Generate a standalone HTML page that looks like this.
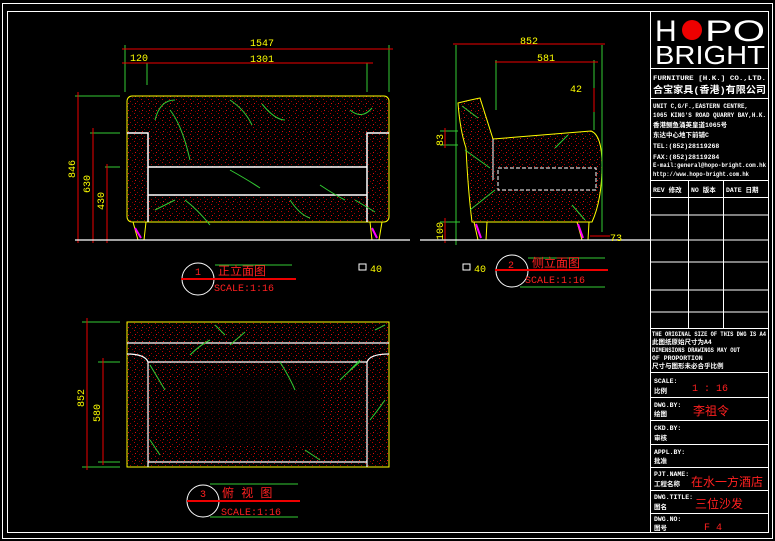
<!DOCTYPE html>
<html><head><meta charset="utf-8"><style>
html,body{margin:0;padding:0;background:#000;width:775px;height:541px;overflow:hidden}
svg{display:block}
text{font-family:"Liberation Mono","Noto Sans CJK SC",monospace}
.y{fill:#ffff00;font-size:10px}
.r{fill:#ff2020}
.w{fill:#fff;font-weight:bold;font-size:6.5px}
.logo{font-family:"Liberation Sans",sans-serif;fill:#fff}
</style></head><body>
<svg width="775" height="541" viewBox="0 0 775 541" xmlns="http://www.w3.org/2000/svg">
<defs>
<pattern id="sp" width="7" height="7" patternUnits="userSpaceOnUse">
<rect x="1" y="1" width="1" height="1" fill="#b00"/><rect x="4" y="3" width="1" height="1" fill="#900"/><rect x="2" y="5" width="1" height="1" fill="#d11"/><rect x="6" y="6" width="1" height="1" fill="#700"/>
</pattern>
</defs>
<rect width="775" height="541" fill="#000"/>
<rect x="2.5" y="3.5" width="770" height="535" fill="none" stroke="#fff" stroke-width="1"/>
<rect x="7.5" y="11.5" width="761" height="521" fill="none" stroke="#fff" stroke-width="1"/>

<!-- FRONT VIEW -->
<g>
<rect x="127" y="96" width="262" height="126" rx="5" fill="url(#sp)"/>
<rect x="148" y="167" width="219" height="28" fill="#000"/>
<rect x="127" y="96" width="262" height="126" rx="5" fill="none" stroke="#ff0" stroke-width="1"/>
<path d="M127 133H148V222M389 133H367V222M148 167H367M148 195H367" stroke="#fff" stroke-width="1.5" fill="none"/>
<path d="M133 222L138 240H144L146 222M370 222L372 240H379L382 222" stroke="#ff0" fill="none"/>
<path d="M135 228L141 238M372 228L377 238" stroke="#f0f" stroke-width="2"/>
<g stroke="#3c3" fill="none" stroke-width="1">
<path d="M170 110Q182 125 190 160"/><path d="M230 100Q245 110 252 125"/><path d="M262 104Q275 120 285 120"/><path d="M185 200Q198 210 210 225"/><path d="M230 170Q248 180 260 188"/><path d="M290 200Q300 215 310 218"/><path d="M320 185Q335 195 345 200"/><path d="M350 110Q362 120 372 108"/><path d="M155 120Q160 100 175 100"/><path d="M155 210L175 200"/><path d="M355 200L375 212"/>
</g>
<g stroke="#3c3" stroke-width="1">
<path d="M125 45V92M389 45V92M147 63V85M367 63V92M75 96H120M90 133H120M105 167H120M78 240H120"/>
</g>
<g stroke="#e00" stroke-width="1">
<path d="M122 49H393M122 63H373M78 92V243M93 128V243M107 164V243"/>
</g>
<path d="M75 240H410" stroke="#fff" stroke-width="1.2"/>
<text class="y" x="250" y="46">1547</text>
<text class="y" x="130" y="61">120</text>
<text class="y" x="250" y="62">1301</text>
<text class="y" transform="translate(75,178) rotate(-90)">846</text>
<text class="y" transform="translate(90,193) rotate(-90)">630</text>
<text class="y" transform="translate(104,210) rotate(-90)">430</text>
<rect x="359" y="264" width="7" height="6" fill="none" stroke="#fff"/>
<text class="y" x="370" y="272">40</text>
<circle cx="198" cy="279" r="16" fill="none" stroke="#fff"/>
<path d="M215 265H292" stroke="#3c3"/><path d="M181 279H296" stroke="#e00" stroke-width="2"/>
<text class="r" x="195" y="275" font-size="10">1</text>
<text class="r" x="218" y="275" font-size="12">正立面图</text>
<text class="r" x="214" y="291" font-size="10">SCALE:1:16</text>
</g>

<!-- SIDE VIEW -->
<g>
<path d="M458 103Q470 100 480 98L493 139L591 131Q602 135 602 165Q602 200 592 222H472Q468 190 466 148Q460 130 458 103Z" fill="url(#sp)" stroke="#ff0"/>
<path d="M498 168H596V190H498Z" fill="#000" stroke="#fff" stroke-dasharray="4 2"/>
<path d="M493 139V180" stroke="#fff"/>
<path d="M474 222L478 240H486L487 222M577 222L582 240H588L589 222" stroke="#ff0" fill="none"/>
<path d="M476 224L481 238M578 224L583 238" stroke="#f0f" stroke-width="2"/>
<g stroke="#3c3" fill="none"><path d="M462 106L478 118M465 150L490 168M470 210L495 190M555 148L568 135M572 205L585 220"/></g>
<g stroke="#3c3"><path d="M456 45V245M496 60V110M594 60V130M602 45V232M440 131H458M440 145H458M440 222H460"/></g>
<g stroke="#e00"><path d="M453 44H605M495 62H598M594 88V112M445 128V148M445 218V243M590 236H610"/></g>
<path d="M420 240H650" stroke="#fff" stroke-width="1.2"/>
<text class="y" x="520" y="44">852</text>
<text class="y" x="537" y="61">581</text>
<text class="y" x="570" y="92">42</text>
<text class="y" transform="translate(443,146) rotate(-90)">83</text>
<text class="y" transform="translate(443,240) rotate(-90)">100</text>
<text class="y" x="610" y="241">73</text>
<rect x="463" y="264" width="7" height="6" fill="none" stroke="#fff"/>
<text class="y" x="474" y="272">40</text>
<circle cx="512" cy="271" r="16" fill="none" stroke="#fff"/>
<path d="M528 258H605M520 287H605" stroke="#3c3"/><path d="M495 270H608" stroke="#e00" stroke-width="2"/>
<text class="r" x="508" y="268" font-size="10">2</text>
<text class="r" x="532" y="267" font-size="12">侧立面图</text>
<text class="r" x="525" y="283" font-size="10">SCALE:1:16</text>
</g>

<!-- TOP VIEW -->
<g>
<rect x="127" y="322" width="262" height="145" fill="url(#sp)"/>
<rect x="127" y="322" width="262" height="145" fill="none" stroke="#ff0"/>
<path d="M127 343H389M127 354Q145 354 148 362V467M389 354Q370 354 367 362V467M148 362H367M148 462H367" stroke="#fff" fill="none" stroke-width="1.2"/>
<rect x="200" y="375" width="120" height="70" fill="#000" opacity=".6"/>
<g stroke="#3c3" fill="none"><path d="M190 355Q200 345 210 340M230 345L245 332M280 362Q290 378 295 390M350 370L360 360M150 365L165 390M340 380Q350 370 360 362M150 440L160 455M305 450L320 460M370 420Q378 410 385 400M215 325L225 335M375 330L385 325"/></g>
<g stroke="#3c3"><path d="M82 322H120M98 362H120M82 467H120M98 462H120"/></g>
<g stroke="#e00"><path d="M87 318V470M103 358V465"/></g>
<text class="y" transform="translate(84,407) rotate(-90)">852</text>
<text class="y" transform="translate(100,422) rotate(-90)">580</text>
<circle cx="203" cy="501" r="16" fill="none" stroke="#fff"/>
<path d="M210 484H298M210 517H298" stroke="#3c3"/><path d="M187 501H300" stroke="#e00" stroke-width="2"/>
<text class="r" x="200" y="497" font-size="10">3</text>
<text class="r" x="222" y="497" font-size="12">俯 视 图</text>
<text class="r" x="221" y="515" font-size="10">SCALE:1:16</text>
</g>

<!-- TITLE BLOCK -->
<g stroke="#fff" stroke-width="1" fill="none">
<path d="M650.5 11V532"/>
<path d="M650 68.5H768M650 98.5H768M650 180.5H768M650 197.5H768M650 215H768M650 240H768M650 262H768M650 290H768M650 312H768M650 328.5H768M650 372.5H768M650 397.5H768M650 420.5H768M650 444.5H768M650 467.5H768M650 490.5H768M650 513.5H768"/>
<path d="M688.5 180V328M723.5 180V328"/>
</g>
<text class="logo" x="655" y="41" font-size="30">H</text>
<circle cx="692" cy="30" r="10" fill="#e00"/>
<text class="logo" x="705" y="41" font-size="30" textLength="60" lengthAdjust="spacingAndGlyphs">PO</text>
<text class="logo" x="655" y="64" font-size="26" textLength="110" lengthAdjust="spacingAndGlyphs">BRIGHT</text>
<text class="w" x="653" y="80" textLength="113" lengthAdjust="spacingAndGlyphs">FURNITURE [H.K.] CO.,LTD.</text>
<text x="653" y="93" fill="#fff" font-size="9.5" font-weight="bold" textLength="113" lengthAdjust="spacingAndGlyphs">合宝家具(香港)有限公司</text>
<text class="w" x="653" y="108" textLength="95" lengthAdjust="spacingAndGlyphs">UNIT C,G/F.,EASTERN CENTRE,</text>
<text class="w" x="653" y="117" textLength="113" lengthAdjust="spacingAndGlyphs">1065 KING'S ROAD QUARRY BAY,H.K.</text>
<text class="w" x="653" y="127">香港鲗鱼涌英皇道1065号</text>
<text class="w" x="653" y="137">东达中心地下前铺C</text>
<text class="w" x="653" y="148" font-size="8">TEL:(852)28119268</text>
<text class="w" x="653" y="159" font-size="8">FAX:(852)28119284</text>
<text class="w" x="653" y="167" font-size="5.5" textLength="113" lengthAdjust="spacingAndGlyphs">E-mail:general@hopo-bright.com.hk</text>
<text class="w" x="653" y="176" font-size="5.5" textLength="96" lengthAdjust="spacingAndGlyphs">http://www.hopo-bright.com.hk</text>
<text class="w" x="653" y="192">REV 修改</text>
<text class="w" x="691" y="192">NO 版本</text>
<text class="w" x="726" y="192">DATE 日期</text>
<text class="w" x="652" y="336" font-size="5" textLength="114" lengthAdjust="spacingAndGlyphs">THE ORIGINAL SIZE OF THIS DWG IS A4</text>
<text class="w" x="652" y="344" font-size="5">此图纸原始尺寸为A4</text>
<text class="w" x="652" y="352" font-size="5" textLength="88" lengthAdjust="spacingAndGlyphs">DIMENSIONS DRAWINGS MAY OUT</text>
<text class="w" x="652" y="360" font-size="5">OF PROPORTION</text>
<text class="w" x="652" y="368" font-size="5.5">尺寸与图形未必合乎比例</text>
<text class="w" x="654" y="383">SCALE:</text><text class="w" x="654" y="393">比例</text>
<text class="r" x="692" y="391" font-size="10">1 : 16</text>
<text class="w" x="654" y="407">DWG.BY:</text><text class="w" x="654" y="416">绘图</text>
<text class="r" x="693" y="415" font-size="12">李祖令</text>
<text class="w" x="654" y="430">CKD.BY:</text><text class="w" x="654" y="440">审核</text>
<text class="w" x="654" y="454">APPL.BY:</text><text class="w" x="654" y="463">批准</text>
<text class="w" x="654" y="476">PJT.NAME:</text><text class="w" x="654" y="486">工程名称</text>
<text class="r" x="691" y="486" font-size="12">在水一方酒店</text>
<text class="w" x="654" y="499">DWG.TITLE:</text><text class="w" x="654" y="509">图名</text>
<text class="r" x="695" y="508" font-size="12">三位沙发</text>
<text class="w" x="654" y="521">DWG.NO:</text><text class="w" x="654" y="530">图号</text>
<text class="r" x="704" y="530" font-size="10">F  4</text>
</svg>
</body></html>
